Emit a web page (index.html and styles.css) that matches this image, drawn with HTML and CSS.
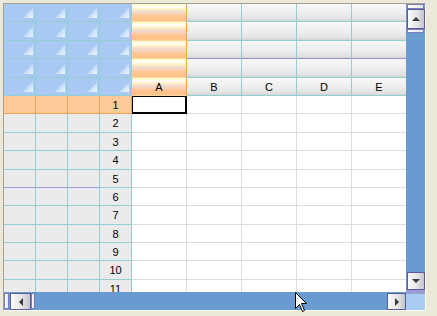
FILE: index.html
```html
<!DOCTYPE html>
<html lang="en">
<head>
    <meta charset="UTF-8">
    <title>Grid</title>
    <link rel="stylesheet" href="styles.css">
</head>
<body>
    <div class="frame">
        <!-- Lembar data -->
        <div class="sheet">
            <div class="cn"></div><div class="cn"></div><div class="cn"></div><div class="cn"></div><div class="ch sel"></div><div class="ch"></div><div class="ch"></div><div class="ch"></div><div class="ch"></div>
            <div class="cn"></div><div class="cn"></div><div class="cn"></div><div class="cn"></div><div class="ch sel"></div><div class="ch"></div><div class="ch"></div><div class="ch"></div><div class="ch"></div>
            <div class="cn"></div><div class="cn"></div><div class="cn"></div><div class="cn"></div><div class="ch sel"></div><div class="ch split"></div><div class="ch split"></div><div class="ch split"></div><div class="ch split"></div>
            <div class="cn"></div><div class="cn"></div><div class="cn"></div><div class="cn"></div><div class="ch sel"></div><div class="ch"></div><div class="ch"></div><div class="ch"></div><div class="ch"></div>
            <div class="cn"></div><div class="cn"></div><div class="cn"></div><div class="cn"></div><div class="ch sel">A</div><div class="ch">B</div><div class="ch">C</div><div class="ch">D</div><div class="ch">E</div>

            <div class="rh sel"></div><div class="rh sel"></div><div class="rh sel"></div><div class="rh sel">1</div><div class="c active"></div><div class="c"></div><div class="c"></div><div class="c"></div><div class="c"></div>
            <div class="rh"></div><div class="rh"></div><div class="rh"></div><div class="rh">2</div><div class="c"></div><div class="c"></div><div class="c"></div><div class="c"></div><div class="c"></div>
            <div class="rh"></div><div class="rh"></div><div class="rh"></div><div class="rh">3</div><div class="c"></div><div class="c"></div><div class="c"></div><div class="c"></div><div class="c"></div>
            <div class="rh"></div><div class="rh"></div><div class="rh"></div><div class="rh">4</div><div class="c"></div><div class="c"></div><div class="c"></div><div class="c"></div><div class="c"></div>
            <div class="rh split"></div><div class="rh split"></div><div class="rh split"></div><div class="rh">5</div><div class="c"></div><div class="c"></div><div class="c"></div><div class="c"></div><div class="c"></div>
            <div class="rh"></div><div class="rh"></div><div class="rh"></div><div class="rh">6</div><div class="c"></div><div class="c"></div><div class="c"></div><div class="c"></div><div class="c"></div>
            <div class="rh"></div><div class="rh"></div><div class="rh"></div><div class="rh">7</div><div class="c"></div><div class="c"></div><div class="c"></div><div class="c"></div><div class="c"></div>
            <div class="rh"></div><div class="rh"></div><div class="rh"></div><div class="rh">8</div><div class="c"></div><div class="c"></div><div class="c"></div><div class="c"></div><div class="c"></div>
            <div class="rh"></div><div class="rh"></div><div class="rh"></div><div class="rh">9</div><div class="c"></div><div class="c"></div><div class="c"></div><div class="c"></div><div class="c"></div>
            <div class="rh"></div><div class="rh"></div><div class="rh"></div><div class="rh">10</div><div class="c"></div><div class="c"></div><div class="c"></div><div class="c"></div><div class="c"></div>
            <div class="rh"></div><div class="rh"></div><div class="rh"></div><div class="rh">11</div><div class="c"></div><div class="c"></div><div class="c"></div><div class="c"></div><div class="c"></div>
        </div>

        <!-- Scrollbar vertikal -->
        <div class="vbar">
            <div class="grip"></div>
            <div class="sbtn up"><span class="arr-up"></span></div>
            <div class="thumb"></div>
            <div class="track"></div>
            <div class="sbtn down"><span class="arr-down"></span></div>
            <div class="vend"></div>
        </div>

        <!-- Scrollbar horizontal -->
        <div class="hbar">
            <div class="grip"></div>
            <div class="sbtn left"><span class="arr-left"></span></div>
            <div class="thumb"></div>
            <div class="track"></div>
            <div class="sbtn right"><span class="arr-right"></span></div>
        </div>
        <div class="corner"></div>
    </div>

    <!-- Kursor mouse -->
    <svg class="cursor" width="13" height="21" viewBox="0 0 13 21">
        <path d="M0.5 0.5 L0.5 16.5 L4.5 12.5 L7.5 19.5 L9.5 18.5 L6.5 11.5 L11.5 11.5 Z" fill="#fff" stroke="#000" stroke-width="1"/>
    </svg>
</body>
</html>
```

FILE: styles.css
```css
/* Style dasar */
body {
    margin: 0;
    background-color: #ece9d8;
    font-family: "Liberation Sans", Arial, sans-serif;
    font-size: 11px;
    color: #000;
}

.frame {
    margin: 3px 0 0 3px;
    width: 421px;
    display: grid;
    grid-template-columns: 402px 19px;
    grid-template-rows: 288px 18px;
    border: 1px solid;
    border-color: #a39f9a #fdfdfb #fdfdfb #a39f9a;
}

/* Style lembar */
.sheet {
    overflow: hidden;
    display: grid;
    grid-template-columns: repeat(4, 32px) repeat(5, 55px);
    grid-auto-rows: 18.4px;
    background-color: #fff;
}

.sheet > div {
    box-sizing: border-box;
    border-right: 1px solid #93cfd0;
    border-bottom: 1px solid #93cfd0;
    text-align: center;
    line-height: 18px;
}

/* Sudut biru dengan segitiga */
.cn {
    background:
        linear-gradient(135deg, transparent 50%, #c2dbf8 50%, #f4f9ff 100%) right 2px bottom 3px / 10px 10px no-repeat,
        #a8caf2;
}

/* Header kolom */
.ch {
    background: linear-gradient(#f8f8f8, #ececec 60%, #e0e0e0 90%, #d2d2d2);
}

.ch.sel {
    background: linear-gradient(#fffbd4 0, #fffbd4 12%, #ffffff 14%, #fff3c6 30%, #f5dccb 42%, #f2d2c0 60%, #ffc996 66%, #ffc186 100%);
    border-right-color: #f5a24c;
    border-bottom-color: #fbd7a2;
}

.ch.split {
    border-bottom-color: #9393d9;
}

/* Header baris */
.rh {
    background-color: #ebebeb;
}

.rh.sel {
    background-color: #ffca98;
    border-right-color: #f2a35a;
    border-bottom-color: #f2a35a;
}

.rh.split {
    border-bottom-color: #9a9ad6;
}

/* Sel data */
.sheet > .c {
    border-right-color: #dcdcdc;
    border-bottom-color: #dcdcdc;
}

.sheet > .c.active {
    border-right-color: #000;
    border-bottom-color: #000;
    box-shadow: inset 0 0 0 1px #000;
}

/* Style scrollbar */
.vbar,
.hbar {
    background-color: #6a9bd0;
    display: flex;
}

.vbar {
    flex-direction: column;
}

.track {
    flex: 1;
}

.grip,
.thumb {
    box-sizing: border-box;
    background: linear-gradient(to right, #ffffff, #e4e4ec);
    border: 1px solid #7c7cb8;
}

.vbar .grip {
    height: 5px;
    margin: 0 1px 0 1px;
}

.vbar .thumb {
    height: 4px;
    margin: 0 1px;
}

.hbar .grip {
    width: 5px;
    margin: 1px 1px 1px 0;
}

.hbar .thumb {
    width: 4px;
    margin: 1px 0;
}

.sbtn {
    box-sizing: border-box;
    display: flex;
    align-items: center;
    justify-content: center;
    background: linear-gradient(to right, #fbfbfb, #e6e6e8 55%, #c4c4cc);
    border: 1px solid #5b5b9c;
}

.vbar .sbtn {
    margin: 0 0 0 1px;
}

.sbtn.up {
    height: 20px;
}

.sbtn.down {
    height: 18px;
}

.vend {
    height: 2px;
    background-color: #9b9bd2;
}

.hbar .sbtn {
    margin: 1px 0 0 0;
}

.sbtn.left {
    width: 21px;
}

.sbtn.right {
    width: 19px;
}

.corner {
    background-color: #a9cdf2;
    border-top: 2px solid #9d9dd6;
}

/* Panah */
.arr-up {
    border-left: 4px solid transparent;
    border-right: 4px solid transparent;
    border-bottom: 4px solid #3a3a3a;
}

.arr-down {
    border-left: 4px solid transparent;
    border-right: 4px solid transparent;
    border-top: 4px solid #3a3a3a;
}

.arr-left {
    border-top: 4px solid transparent;
    border-bottom: 4px solid transparent;
    border-right: 4px solid #3a3a3a;
}

.arr-right {
    border-top: 4px solid transparent;
    border-bottom: 4px solid transparent;
    border-left: 4px solid #3a3a3a;
}

/* Kursor di atas konten */
.cursor {
    position: absolute;
    left: 295px;
    top: 292px;
}
```
